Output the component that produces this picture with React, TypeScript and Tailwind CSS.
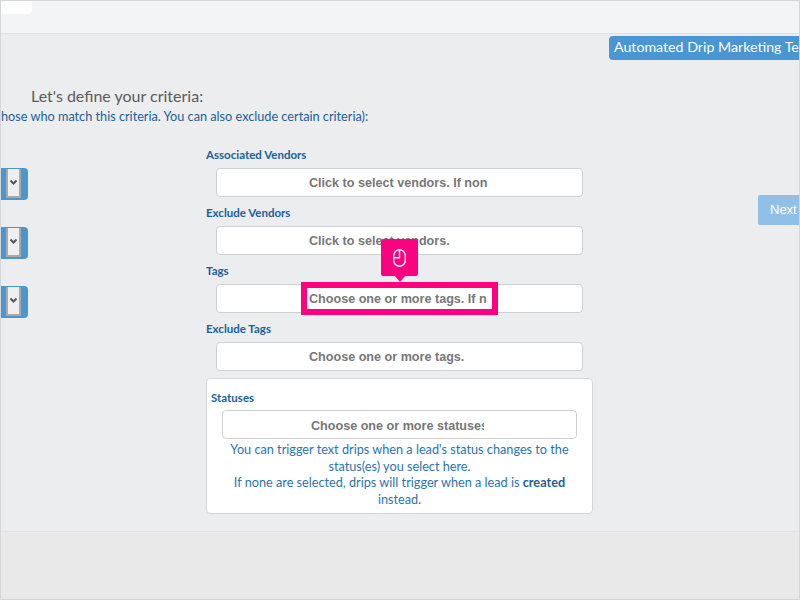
const fieldFont = "font-['Liberation_Sans',Arial,sans-serif]";

function FieldLabel({ children, className = "" }: { children: React.ReactNode; className?: string }) {
  return <div className={`text-[11.5px] font-bold leading-[14px] text-[#1a6199] ${className}`}>{children}</div>;
}

function PickerBox({ text, className = "" }: { text: string; className?: string }) {
  return (
    <div className={`flex h-[29px] items-center justify-center rounded-[4px] border border-[#cfd0d2] bg-white pb-[2px] pr-[3px] ${className}`}>
      <div className="w-[178px] overflow-hidden whitespace-nowrap leading-[16px]">
        <span className={`${fieldFont} text-[12.6px] font-bold text-[#777]`}>{text}</span>
      </div>
    </div>
  );
}

function SideSelect() {
  return (
    <div className="flex h-[32px] w-[27px] justify-end rounded-r-[4px] bg-[#4a96d3] pb-[2px] pr-[7px] pt-[1px]">
      <div className="flex w-[15px] items-center justify-center border-x-2 border-b-2 border-[#a9a9a9] bg-[#efefef]">
        <svg width="9" height="7" viewBox="0 0 9 7" fill="none" stroke="#555" strokeWidth="2">
          <path d="M1.5 1.5 4.5 4.5 7.5 1.5" />
        </svg>
      </div>
    </div>
  );
}

export default function App() {
  return (
    <div className="flex h-[600px] w-[800px] flex-col overflow-hidden border-x border-[#d5d6d8] bg-[#ecedef] font-['Lato','Noto_Sans',sans-serif]">
      <header className="h-[34px] shrink-0 border-y border-b-[#dfe0e2] border-t-[#d5d6d8] bg-[#f3f4f6]">
        <div className="h-[13px] w-[31px] rounded-br-[4px] bg-white" />
      </header>

      <main className="relative flex min-h-0 flex-1">
        <div className="flex w-[205px] shrink-0 flex-col">
          <div className="mt-[52px] whitespace-nowrap pl-[30px] text-[16px] leading-[20px] text-[#5a5a5a]">Let's define your criteria:</div>
          <div className="mt-[2px] h-[20px] w-[370px] overflow-hidden whitespace-nowrap text-[12.7px] leading-[16px] text-[#1a6199]">
            hose who match this criteria. You can also exclude certain criteria):
          </div>
          <div className="mt-[40px] flex flex-col gap-[27px]">
            <SideSelect />
            <SideSelect />
            <SideSelect />
          </div>
        </div>

        <div className="mt-[114px] flex w-[388px] shrink-0 flex-col">
          <FieldLabel>Associated Vendors</FieldLabel>
          <PickerBox text="Click to select vendors. If none are selected" className="ml-[10px] mt-[6px] w-[367px]" />
          <FieldLabel className="mt-[9px]">Exclude Vendors</FieldLabel>
          <PickerBox text="Click to select vendors." className="ml-[10px] mt-[6px] w-[367px]" />
          <FieldLabel className="mt-[9px]">Tags</FieldLabel>
          <PickerBox text="Choose one or more tags. If none" className="ml-[10px] mt-[6px] w-[367px]" />
          <FieldLabel className="mt-[9px]">Exclude Tags</FieldLabel>
          <PickerBox text="Choose one or more tags." className="ml-[10px] mt-[6px] w-[367px]" />
          <section className="mt-[7px] h-[136px] w-[387px] rounded-[4px] border border-[#d5d6d8] bg-white px-[4px] pt-[12px]">
            <FieldLabel>Statuses</FieldLabel>
            <div className="ml-[11px] mt-[5px] flex h-[29px] w-[355px] items-center justify-center rounded-[4px] border border-[#cfd0d2] bg-white pr-[4px]">
              <div className="w-[173px] overflow-hidden whitespace-nowrap leading-[16px]">
                <span className={`${fieldFont} text-[12.6px] font-bold text-[#777]`}>Choose one or more statuses</span>
              </div>
            </div>
            <p className="mx-auto mt-[2px] w-[345px] text-center text-[12.7px] leading-[16.5px] text-[#2b74ad]">
              You can trigger text drips when a lead's status changes to the status(es) you select here.
              <br />
              If none are selected, drips will trigger when a lead is <b className="text-[#1a6199]">created</b> instead.
            </p>
          </section>
        </div>

        <div className="flex min-w-0 flex-1 flex-col items-end">
          <div className="mt-[2px] flex h-[24px] w-[190px] shrink-0 items-center overflow-hidden whitespace-nowrap rounded-l-[4px] bg-[#4a96d3] pb-[2px] pl-[5px] text-[14.2px] text-white">
            Automated Drip Marketing Text
          </div>
          <div className={`${fieldFont} mt-[135px] flex h-[30px] w-[41px] items-center rounded-l-[2px] bg-[#90bfe7] pl-[12px] text-[13px] text-white`}>
            Next
          </div>
        </div>

        {/* callout on the Tags picker */}
        <div className="absolute left-[300px] top-[205px] flex flex-col items-center">
          <div className="flex h-[37px] w-[37px] items-center justify-center rounded-[2px] bg-[#ff0080]">
            <svg width="13" height="18" viewBox="0 0 13 18" fill="none" stroke="white" strokeWidth="1.4">
              <rect x="0.7" y="0.7" width="11.6" height="16.6" rx="5.8" />
              <path d="M6.5 0.7v8H0.7" />
            </svg>
          </div>
          <div className="h-0 w-0 border-x-[5px] border-t-[6px] border-x-transparent border-t-[#ff0080]" />
          <div className="h-[33px] w-[197px] border-[6px] border-[#ff0080]" />
        </div>
      </main>

      <footer className="h-[69px] shrink-0 border-y border-b-[#d5d6d8] border-t-[#dfe3ec] bg-[#e9e9e9]" />
    </div>
  );
}
